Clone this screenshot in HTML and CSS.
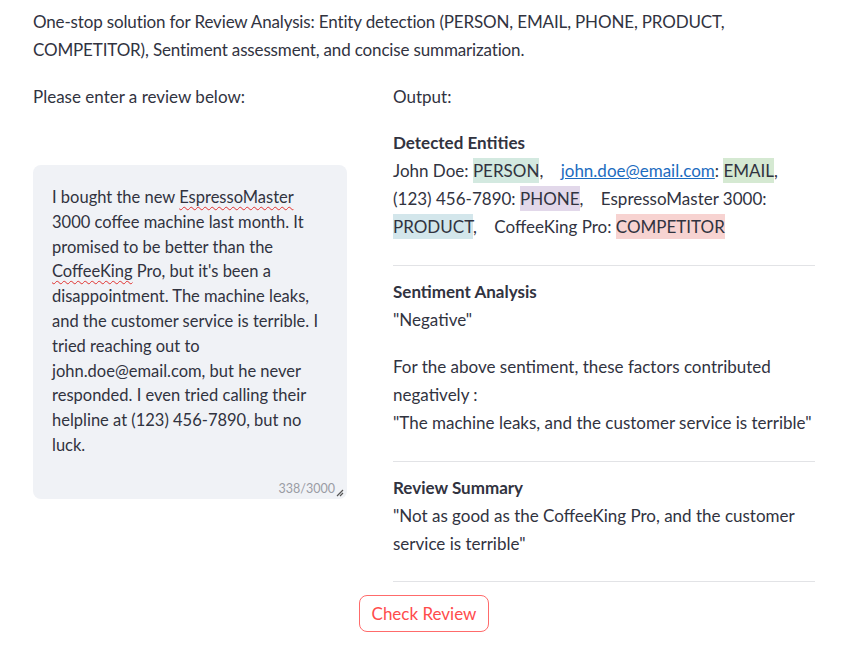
FILE: index.html
```html
<!DOCTYPE html>
<html>
<head>
<meta charset="utf-8">
<link rel="stylesheet" href="styles.css">
</head>
<body>
<main class="page">
  <p class="intro">One-stop solution for Review Analysis: Entity detection (PERSON, EMAIL, PHONE, PRODUCT, COMPETITOR), Sentiment assessment, and concise summarization.</p>
  <div class="cols">
    <section class="left">
      <p class="label">Please enter a review below:</p>
      <div class="textarea">
        <div class="ta-text">I bought the new <span class="spell">EspressoMaster</span> 3000 coffee machine last month. It promised to be better than the <span class="spell">CoffeeKing</span> Pro, but it's been a disappointment. The machine leaks, and the customer service is terrible. I tried reaching out to john.doe@email.com, but he never responded. I even tried calling their helpline at (123) 456-7890, but no luck.</div>
        <div class="counter">338/3000</div>
        <svg class="resize" width="8" height="8" viewBox="0 0 8 8"><path d="M7 1L1 7M7 4L4 7" stroke="#555" stroke-width="1.2" fill="none"/></svg>
      </div>
    </section>
    <section class="right">
      <p class="label">Output:</p>
      <div class="block first">
        <div class="heading">Detected Entities</div>
        <div class="body">John Doe: <span class="tag person">PERSON</span>,&nbsp;&nbsp;&nbsp; <a class="link" href="#">john.doe@email.com</a>: <span class="tag email">EMAIL</span>, (123) 456-7890: <span class="tag phone">PHONE</span>,&nbsp;&nbsp;&nbsp; EspressoMaster 3000: <span class="tag product">PRODUCT</span>,&nbsp;&nbsp;&nbsp; CoffeeKing Pro: <span class="tag competitor">COMPETITOR</span></div>
      </div>
      <hr class="rule">
      <div class="block">
        <div class="heading">Sentiment Analysis</div>
        <div class="body">"Negative"</div>
        <div class="body para">For the above sentiment, these factors contributed negatively :<br>"The machine leaks, and the customer service is terrible"</div>
      </div>
      <hr class="rule">
      <div class="block">
        <div class="heading">Review Summary</div>
        <div class="body">"Not as good as the CoffeeKing Pro, and the customer service is terrible"</div>
      </div>
      <hr class="rule last">
    </section>
  </div>
  <div class="actions">
    <button class="btn">Check Review</button>
  </div>
</main>
</body>
</html>
```

FILE: styles.css
```css
html, body {
  margin: 0;
  padding: 0;
  background: #ffffff;
}
body {
  font-family: Lato, "Open Sans", sans-serif;
  color: #31333f;
  font-size: 17px;
  line-height: 28px;
}
.page {
  width: 782px;
  padding: 8px 0 0 33px;
}
.intro {
  margin: 0 0 19px 0;
  letter-spacing: -0.15px;
}
.cols {
  display: grid;
  grid-template-columns: 314px 422px;
  column-gap: 46px;
  align-items: start;
}
.label {
  margin: 0;
}
.textarea {
  position: relative;
  margin-top: 54px;
  height: 334px;
  box-sizing: border-box;
  background: #f0f2f6;
  border-radius: 8px;
  padding: 20px 19px 0 19px;
}
.ta-text {
  font-size: 16.5px;
  line-height: 24.8px;
}
.spell {
  text-decoration: underline wavy #e0312f;
  text-decoration-thickness: 1px;
  text-underline-offset: 3px;
}
.counter {
  position: absolute;
  right: 12px;
  bottom: 1px;
  font-size: 12.5px;
  line-height: 18px;
  color: #9a9ca4;
}
.resize {
  position: absolute;
  right: 3px;
  bottom: 2px;
}
.block.first {
  margin-top: 18px;
}
.heading {
  font-weight: 700;
}
.body.para {
  margin-top: 19px;
}
.tag {
  padding: 2px 0;
}
.person { background: #d3e9e0; }
.email { background: #d5e9d2; }
.phone { background: #e2d8ea; }
.product { background: #d3e6eb; }
.competitor { background: #f7d3d1; }
.link {
  color: #1c6cc0;
  text-decoration: underline;
}
.rule {
  border: 0;
  border-top: 1px solid #e2e3e6;
  margin: 24px 0 12px 0;
}
.rule.last {
  margin: 23px 0 0 0;
}
.actions {
  display: flex;
  justify-content: center;
  margin-top: 13px;
}
.btn {
  font-family: inherit;
  font-size: 17px;
  color: #ff4b4b;
  background: #fff;
  border: 1px solid #ff6b6b;
  border-radius: 8px;
  width: 130px;
  height: 37px;
  padding: 0;
}
```
